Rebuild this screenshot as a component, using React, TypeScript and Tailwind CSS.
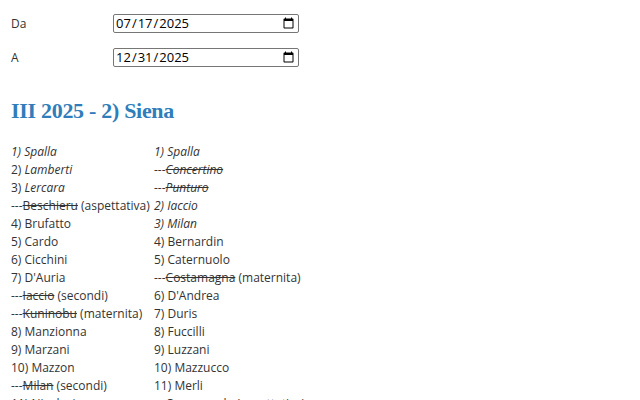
type Cell = {
  pre?: string;
  name: string;
  italic?: boolean;
  allItalic?: boolean;
  struck?: boolean;
  note?: string;
};

const left: Cell[] = [
  { pre: '1) ', name: 'Spalla', allItalic: true },
  { pre: '2) ', name: 'Lamberti', italic: true },
  { pre: '3) ', name: 'Lercara', italic: true },
  { pre: '---', name: 'Beschieru', struck: true, note: ' (aspettativa)' },
  { pre: '4) ', name: 'Brufatto' },
  { pre: '5) ', name: 'Cardo' },
  { pre: '6) ', name: 'Cicchini' },
  { pre: '7) ', name: "D'Auria" },
  { pre: '---', name: 'Iaccio', struck: true, note: ' (secondi)' },
  { pre: '---', name: 'Kuninobu', struck: true, note: ' (maternita)' },
  { pre: '8) ', name: 'Manzionna' },
  { pre: '9) ', name: 'Marzani' },
  { pre: '10) ', name: 'Mazzon' },
  { pre: '---', name: 'Milan', struck: true, note: ' (secondi)' },
  { pre: '11) ', name: 'Nicolosi' },
];

const right: Cell[] = [
  { pre: '1) ', name: 'Spalla', allItalic: true },
  { pre: '---', name: 'Concertino', struck: true, italic: true },
  { pre: '---', name: 'Punturo', struck: true, italic: true },
  { pre: '2) ', name: 'Iaccio', allItalic: true },
  { pre: '3) ', name: 'Milan', allItalic: true },
  { pre: '4) ', name: 'Bernardin' },
  { pre: '5) ', name: 'Caternuolo' },
  { pre: '---', name: 'Costamagna', struck: true, note: ' (maternita)' },
  { pre: '6) ', name: "D'Andrea" },
  { pre: '7) ', name: 'Duris' },
  { pre: '8) ', name: 'Fuccilli' },
  { pre: '9) ', name: 'Luzzani' },
  { pre: '10) ', name: 'Mazzucco' },
  { pre: '11) ', name: 'Merli' },
  { pre: '---', name: 'Carmagnola', struck: true, note: ' (aspettativa)' },
];

function Entry({ c }: { c: Cell }) {
  return (
    <div className={c.allItalic ? 'italic whitespace-nowrap' : 'whitespace-nowrap'}>
      {c.pre}
      <span className={(c.italic ? 'italic ' : '') + (c.struck ? 'line-through' : '')}>{c.name}</span>
      {c.note}
    </div>
  );
}

export default function App() {
  return (
    <div className="w-[640px] h-[400px] overflow-hidden bg-white px-[11px] pt-[14px] text-[12px] text-[#333] font-['Open_Sans',sans-serif]">
      <div className="flex flex-col gap-[15px]">
        <div className="flex items-center">
          <label className="w-[102px] leading-[16px]">Da</label>
          <input
            type="date"
            defaultValue="2025-07-17"
            className="w-[186px] h-[19px] border border-[#767676] rounded-[2px] px-[1px] text-[13px] text-black"
          />
        </div>
        <div className="flex items-center">
          <label className="w-[102px] leading-[16px]">A</label>
          <input
            type="date"
            defaultValue="2025-12-31"
            className="w-[186px] h-[19px] border border-[#767676] rounded-[2px] px-[1px] text-[13px] text-black"
          />
        </div>
      </div>

      <h2 className="mt-[31px] text-[22px] leading-[26px] font-bold tracking-[-0.3px] text-[#2f7dbb] font-['Liberation_Serif',serif]">
        III 2025 - 2) Siena
      </h2>

      <div className="mt-[19px] grid grid-cols-[143px_auto] leading-[18px]">
        {left.map((c, i) => (
          <div key={i} className="contents">
            <Entry c={c} />
            <Entry c={right[i]} />
          </div>
        ))}
      </div>
    </div>
  );
}
